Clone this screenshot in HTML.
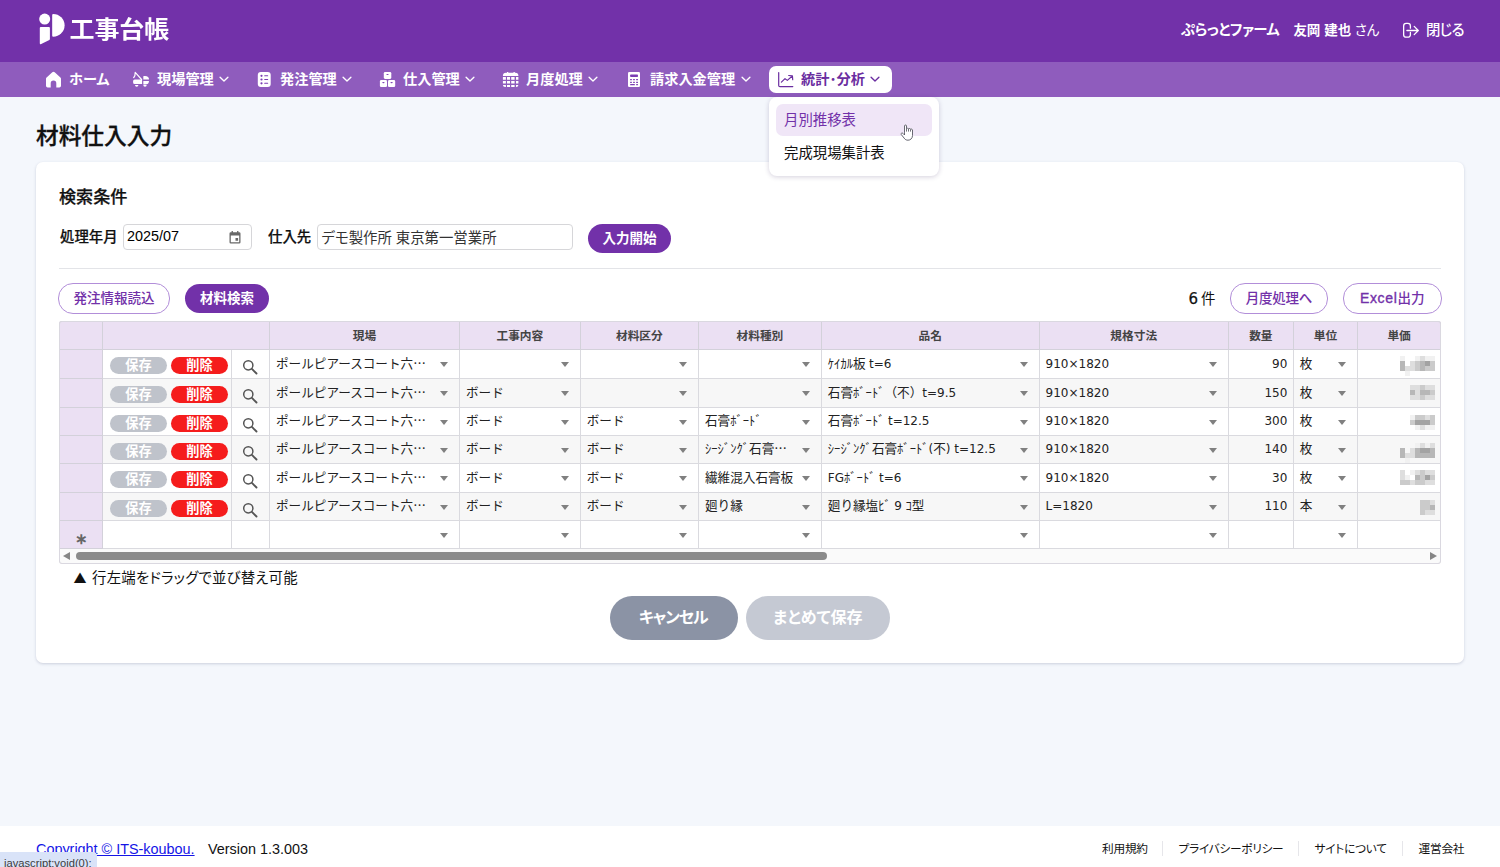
<!DOCTYPE html>
<html lang="ja">
<head>
<meta charset="utf-8">
<title>工事台帳 - 材料仕入入力</title>
<style>
*{box-sizing:border-box;margin:0;padding:0}
html,body{width:1500px;height:867px;overflow:hidden}
body{font-feature-settings:"palt";position:relative;background:#f4f7fc;color:#111;font-family:"Liberation Sans","Noto Sans CJK JP",sans-serif;font-size:14.4px;line-height:1}
a{color:inherit;text-decoration:none}
svg{display:block}

/* ===== top header ===== */
.top{position:absolute;left:0;top:0;width:1500px;height:62px;background:#7231a9;color:#fff}
.logo{position:absolute;left:39px;top:13px;width:26px;height:32px}
.brand{position:absolute;left:69.500px;top:15px;font-size:25px;font-weight:700;line-height:28px;letter-spacing:-.1px;white-space:nowrap;transform:scaleY(.94);transform-origin:50% 100%}
.user{position:absolute;left:1181px;top:21px;font-size:14.4px;line-height:18px;white-space:nowrap;font-weight:500}
.user b{font-weight:700;margin-left:10px;font-size:13.500px}.user .co{letter-spacing:-.4px;font-weight:700}.user .san{margin-left:-.5px;font-weight:400;font-size:13.500px}
.close{letter-spacing:-.6px;position:absolute;left:1402px;top:21px;font-size:14.4px;line-height:18px;white-space:nowrap;display:flex;align-items:center;font-weight:500}
.close svg{margin-right:6px}

/* ===== nav ===== */
.menu{position:absolute;left:0;top:62px;width:1500px;height:34.5px;background:#8f5cbd;color:#fff;font-weight:700;font-size:14.200px}
.mi{position:absolute;top:4px;height:27px;display:flex;align-items:center;white-space:nowrap;line-height:27px}
.mi .ic{width:17px;height:17px;margin-right:7px;flex:none}
.mi .cv{width:10px;height:6.400px;margin-left:5.500px;flex:none}
.mi.on{background:#fff;color:#6a2da0;border-radius:7px;padding:0 11.600px 0 9px}
.mi.on .ic{margin-right:6px}

/* dropdown */
.dd{z-index:5;position:absolute;left:769px;top:97px;width:170px;height:79px;background:#fff;border-radius:8px;box-shadow:0 1px 5px rgba(40,20,80,.2);font-size:14.4px;font-weight:400}
.dd a{position:absolute;left:7px;width:156px;height:32px;line-height:32px;padding-left:8px;border-radius:7px;color:#111}
.dd a.hv{background:#f0e6f7;color:#7231a9}
.cursor{z-index:6;position:absolute;left:900px;top:124px;width:14px;height:17px;filter:drop-shadow(0 0 .5px #fff)}

/* ===== main ===== */
h1{position:absolute;left:36px;top:121.500px;font-size:22.700px;line-height:28px;font-weight:500;-webkit-text-stroke:.3px #111;white-space:nowrap;color:#111}
.card{position:absolute;left:36px;top:162px;width:1428px;height:501px;background:#fff;border-radius:7px;box-shadow:0 1px 3px rgba(60,70,110,.22)}
h2{position:absolute;left:23px;top:24.500px;font-size:17.100px;line-height:22px;font-weight:500;-webkit-text-stroke:.25px #111;white-space:nowrap}
.lbl{position:absolute;font-weight:500;-webkit-text-stroke:.2px #111;font-size:14.4px;line-height:18px;white-space:nowrap}
.inp{position:absolute;height:26px;border:1px solid #d6d6d9;border-radius:4px;background:#fff;font-size:14.4px;line-height:24px;padding-left:3px;white-space:nowrap;color:#000}
.btn{position:absolute;height:29px;border-radius:15px;font-size:13.5px;font-weight:700;line-height:29px;text-align:center;white-space:nowrap}
.btn.fill{background:#7231a9;color:#fff}
.btn.line{border:1px solid #b28ed9;color:#7231a9;background:#fff;line-height:29.500px;font-weight:500}
.hr{position:absolute;left:23px;top:106px;width:1382px;height:1px;background:#e3e4e8}
.cnt{position:absolute;left:1152.500px;top:126.500px;font-size:14.400px;line-height:20px;white-space:nowrap}
.n6{font-family:"DejaVu Sans","Liberation Sans",sans-serif;font-size:15px;margin-right:3px;-webkit-text-stroke:.25px #111}

/* ===== grid ===== */
.grid{position:absolute;left:23px;top:159px;width:1382px;height:243px;border-radius:3px;overflow:hidden;background:#fff;font-size:12.600px;font-feature-settings:normal;box-shadow:inset 0 0 0 1px #dcdbe1}
.grid::after{content:"";position:absolute;left:0;top:0;right:0;bottom:0;border:1px solid #dad8e0;border-radius:3px;pointer-events:none}
.row{position:absolute;left:0;width:1410px}
.c{position:absolute;top:0;height:100%;border-right:1px solid #dadadf;border-bottom:1px solid #dadadf;padding-left:6px;white-space:nowrap;overflow:hidden;color:#222;background:#fff}
.row.h .c{background:#ebe0f3;font-weight:700;font-size:11.700px;text-align:center;padding:0;color:#444;border-color:#d3d1da;border-top:1px solid #d8d7de;line-height:27px}
.row.alt .c{background:#f7f7f7}
.row .c.rh{background:#ebe0f3;border-color:#d3d1da;border-left:1px solid #d8d7de}
.c.gb{letter-spacing:0}
.el{font-family:"Noto Sans CJK JP",sans-serif;line-height:0}
.c.num{text-align:right;padding:0 5.500px 0 0}
.c i.ar{position:absolute;right:11px;top:11.500px;width:0;height:0;border-left:4.600px solid transparent;border-right:4.600px solid transparent;border-top:5.600px solid #808080}
.lat{font-family:"DejaVu Sans","Liberation Sans",sans-serif;font-size:12px}
.pill{position:absolute;top:7px;height:17px;width:57px;border-radius:9px;color:#fff;font-weight:700;font-size:13.200px;line-height:17px;text-align:center}
.pill.sv{left:6.600px;background:#bfc3cb}
.pill.dl{left:67.600px;background:#f51c1c}
.mag{position:absolute;left:10px;top:9px;width:16px;height:16px}
.ast{position:absolute;left:15px;top:8px;font-size:15px;line-height:20px;color:#666;font-weight:700}
.mos{position:absolute;filter:blur(.4px)}
.sb{position:absolute;left:1px;top:228px;width:1380px;height:14px;background:#fafafa}
.sb .th{position:absolute;left:16px;top:3px;width:751px;height:8px;border-radius:4px;background:#8b8b8b}
.sb .l{position:absolute;left:3px;top:3px;width:0;height:0;border-top:4.700px solid transparent;border-bottom:4.700px solid transparent;border-right:7.500px solid #858585}
.sb .r{position:absolute;right:3.500px;top:3px;width:0;height:0;border-top:4.700px solid transparent;border-bottom:4.700px solid transparent;border-left:7.500px solid #868686}
.dt{position:relative;top:-1px}
.calic{position:absolute;right:10px;top:6px;width:12px;height:13px}
.inp.sup{font-size:14.400px;color:#333;line-height:26px;padding-left:4px}
.ex{letter-spacing:.7px;font-size:14px;-webkit-text-stroke:.35px #7231a9}

.note{position:absolute;left:37.500px;top:405.500px;font-size:14.400px;line-height:20px;white-space:nowrap;letter-spacing:.22px}
.note .tri{font-family:"Noto Sans CJK JP",sans-serif;letter-spacing:0;margin-right:1.300px;font-size:13px}
.big{position:absolute;top:434px;height:44px;border-radius:22px;color:#fff;font-size:16px;font-weight:700;line-height:44px;text-align:center;white-space:nowrap}

/* ===== footer ===== */
.foot{position:absolute;left:0;top:826px;width:1500px;height:41px;background:#fff;font-size:14.400px}
.foot .cp{position:absolute;left:36px;top:13.500px;line-height:18px;color:#1414e6;text-decoration:underline;white-space:nowrap}
.foot .ver{position:absolute;left:208px;top:13.500px;line-height:18px;white-space:nowrap;color:#111}
.foot .lk{position:absolute;top:14px;line-height:18px;font-size:11.700px;white-space:nowrap;color:#111;letter-spacing:-.25px}
.foot .sp{position:absolute;top:15px;width:1px;height:15px;background:#e6e6ea}
.status{position:absolute;left:0;top:851.500px;height:16px;width:97px;background:#d9e3f8;border-top-right-radius:4px;font-size:11.200px;line-height:14px;padding:4px 0 0 4px;color:#3c3c3c;white-space:nowrap;overflow:hidden;font-feature-settings:normal}
</style>
</head>
<body>

<header class="top">
  <svg class="logo" viewBox="0 0 26 32" fill="#fff"><circle cx="5.700" cy="6.100" r="5.500"/><path d="M1.800 13.900h8.100a1 1 0 0 1 1 1V26a1 1 0 0 1-.55.900L2.200 31.100a1 1 0 0 1-1.400-.9V14.900a1 1 0 0 1 1-1z"/><path d="M13.200 1.900a1 1 0 0 1 1-1 11.400 11.400 0 0 1 0 22.800 1 1 0 0 1-1-1z"/></svg>
  <div class="brand">工事台帳</div>
  <div class="user"><span class="co">ぷらっとファーム</span> <b>友岡 建也</b> <span class="san">さん</span></div>
  <a class="close"><svg width="18" height="18" viewBox="0 0 18 18" fill="none" stroke="#fff" stroke-width="1.300" stroke-linecap="round" stroke-linejoin="round"><path d="M8.400 7.200V4.950a2.500 2.500 0 0 0-2.500-2.500H4.150a2.500 2.500 0 0 0-2.500 2.500V13.650a2.500 2.500 0 0 0 2.500 2.500H5.900a2.500 2.500 0 0 0 2.500-2.500V11.400"/><path d="M4.900 9.500H16.200M12.200 5.400 16.300 9.500 12.200 13.600"/></svg>閉じる</a>
</header>

<nav class="menu">
  <a class="mi" style="left:45px"><svg class="ic" viewBox="0 0 17 17" fill="#fff"><path d="M7.300 1.300a1.800 1.800 0 0 1 2.400 0l5.700 5.100a1.800 1.800 0 0 1 .6 1.340V14.800a1.700 1.700 0 0 1-1.700 1.700H11.300V12.400a2.800 2.800 0 0 0-5.600 0v4.100H2.700A1.700 1.700 0 0 1 1 14.800V7.740a1.800 1.800 0 0 1 .6-1.340z"/></svg>ホーム</a>
  <a class="mi" style="left:133px"><svg class="ic" viewBox="0 0 17 17" fill="#fff"><path d="M1.700 8.500H9.100V13H1.700A1.600 1.600 0 0 1 .1 11.400V10.100A1.600 1.600 0 0 1 1.700 8.500z"/><path d="M.7 6.600 1.900 4.600 2.200 1.300 8.600 8.500" fill="none" stroke="#fff" stroke-width="1.150" stroke-linejoin="round" stroke-linecap="round"/><path d="M10.300 8.500V5.500a.5.500 0 0 1 .5-.5h1.200a4 3.500 0 0 1 4 3.500z"/><path d="M10.300 10H16a4 3.500 0 0 1-4 3.500h-1.700z"/><path d="M2 14.100h3.400a1.700 1.700 0 0 1-3.400 0zM10.300 14.100h3.400a1.700 1.700 0 0 1-3.400 0z"/></svg>現場管理<svg class="cv" viewBox="0 0 11 7" fill="none" stroke="currentColor" stroke-width="1.500" stroke-linecap="round" stroke-linejoin="round"><path d="M1.200 1.300 5.500 5.500 9.800 1.300"/></svg></a>
  <a class="mi" style="left:256px"><svg class="ic" viewBox="0 0 17 17"><rect x="1.800" y=".9" width="12.900" height="15.100" rx="3" fill="#fff"/><g fill="#7a3db3"><circle cx="5.500" cy="4.800" r="1.100"/><circle cx="5.500" cy="8.500" r="1.100"/><circle cx="5.500" cy="12.300" r="1.100"/><rect x="8.200" y="4.250" width="4" height="1.100" rx=".5"/><rect x="8.200" y="7.950" width="4" height="1.100" rx=".5"/><rect x="8.200" y="11.750" width="4" height="1.100" rx=".5"/></g></svg>発注管理<svg class="cv" viewBox="0 0 11 7" fill="none" stroke="currentColor" stroke-width="1.500" stroke-linecap="round" stroke-linejoin="round"><path d="M1.200 1.300 5.500 5.500 9.800 1.300"/></svg></a>
  <a class="mi" style="left:379px"><svg class="ic" viewBox="0 0 17 17"><g fill="#fff"><rect x="4.800" y="1" width="7.500" height="6.900" rx="1.300"/><rect x=".9" y="9.100" width="7.100" height="6.900" rx="1.300"/><rect x="9" y="9.100" width="7.200" height="6.900" rx="1.300"/></g><g fill="#7a3db3"><ellipse cx="8.500" cy="3.500" rx="1.200" ry=".55"/><ellipse cx="4.400" cy="11.600" rx="1.200" ry=".55"/><ellipse cx="12.600" cy="11.600" rx="1.200" ry=".55"/></g></svg>仕入管理<svg class="cv" viewBox="0 0 11 7" fill="none" stroke="currentColor" stroke-width="1.500" stroke-linecap="round" stroke-linejoin="round"><path d="M1.200 1.300 5.500 5.500 9.800 1.300"/></svg></a>
  <a class="mi" style="left:502px"><svg class="ic" viewBox="0 0 17 17" fill="#fff"><path d="M.9 5V4.800a3 3 0 0 1 3-3H5V.9h1.300v.9h5.200V.9h1.300v.9h.6a3 3 0 0 1 3 3V5z"/><path d="M.9 6.100h3v2.600h-3zm4.100 0h3v2.600H5zm4.200 0h3.400v2.600H9.200zm4.800 0h2.400v2.600H14zM.9 10h3v2.600h-3zm4.100 0h3v2.600H5zm4.200 0h3.400v2.600H9.200zm4.800 0h2.400v2.600H14zM.9 14h3v2H3.100A2.200 2.200 0 0 1 .9 14zm4.100 0h3v2H5zm4.200 0h3.400v2H9.200zm4.800 0h2.400a2.200 2.200 0 0 1-2.200 2H14z"/></svg>月度処理<svg class="cv" viewBox="0 0 11 7" fill="none" stroke="currentColor" stroke-width="1.500" stroke-linecap="round" stroke-linejoin="round"><path d="M1.200 1.300 5.500 5.500 9.800 1.300"/></svg></a>
  <a class="mi" style="left:626px"><svg class="ic" viewBox="0 0 17 17"><rect x="2" y="1" width="12" height="15" rx="1.200" fill="#fff"/><g fill="#7a3db3"><rect x="4.100" y="3.400" width="7.900" height="2.600" rx=".8"/><rect x="4.100" y="8.100" width="1.800" height="1.100" rx=".3"/><rect x="7.100" y="8.100" width="1.800" height="1.100" rx=".3"/><rect x="10.100" y="8.100" width="1.900" height="1.100" rx=".3"/><rect x="4.100" y="10.800" width="1.800" height="1.100" rx=".3"/><rect x="7.100" y="10.800" width="1.800" height="1.100" rx=".3"/><rect x="10.100" y="10.800" width="1.900" height="1.100" rx=".3"/><rect x="4.100" y="13.100" width="4.800" height="1.200" rx=".4"/><rect x="10.100" y="13.100" width="1.900" height="1.200" rx=".4"/></g></svg>請求入金管理<svg class="cv" viewBox="0 0 11 7" fill="none" stroke="currentColor" stroke-width="1.500" stroke-linecap="round" stroke-linejoin="round"><path d="M1.200 1.300 5.500 5.500 9.800 1.300"/></svg></a>
  <a class="mi on" style="left:769px"><svg class="ic" viewBox="0 0 17 17" fill="none" stroke="currentColor" stroke-width="1.200" stroke-linecap="round" stroke-linejoin="round"><path d="M.7 1.600V14.400a1.200 1.200 0 0 0 1.200 1.200H14.800"/><path d="M3.400 11.200 7 7.600 9.300 9.400 14.300 5M10.700 4.500 14.400 4.900 14.700 8.700"/></svg>統計･分析<svg class="cv" viewBox="0 0 11 7" fill="none" stroke="currentColor" stroke-width="1.500" stroke-linecap="round" stroke-linejoin="round"><path d="M1.200 1.300 5.500 5.500 9.800 1.300"/></svg></a>
</nav>

<div class="dd">
  <a class="hv" style="top:7px">月別推移表</a>
  <a style="top:40px">完成現場集計表</a>
</div>
<svg class="cursor" viewBox="0 0 14 17"><path d="M4.500 8.800V2a1 1 0 0 1 2 0V4.600c.3-.5 1.700-.5 2 .1.400-.4 1.700-.3 2 .4.500-.3 1.800-.1 2 .9V11.500c0 2.800-2 4.700-4.500 4.700-1.800 0-2.900-.7-3.800-2L1.300 10.600c-.4-.6-.2-1.200.3-1.500.5-.2 1-.1 1.400.3L4.500 11z" fill="#fff" stroke="#4d4d58" stroke-width=".85" stroke-linejoin="round"/><path d="M6.500 4.600V7.600M8.500 4.900V7.600M10.500 5.300V7.600" stroke="#4d4d58" stroke-width=".8" fill="none"/></svg>


<h1>材料仕入入力</h1>

<section class="card">
  <h2>検索条件</h2>
  <span class="lbl" style="left:24px;top:66px">処理年月</span>
  <div class="inp" style="left:87px;top:62px;width:128.500px"><span class="dt">2025/07</span><svg class="calic" viewBox="0 0 12 13"><path d="M2.600 0h1.300v1.300h4.200V0h1.300v1.300h.8A1.300 1.300 0 0 1 11.500 2.600v8.600a1.300 1.300 0 0 1-1.300 1.300H1.800A1.300 1.300 0 0 1 .5 11.200V2.600A1.300 1.300 0 0 1 1.800 1.300h.8zM1.800 4.400v6.800h8.400V4.400zM6.500 7h2.600v2.700H6.500z" fill="#686868" fill-rule="evenodd"/></svg></div>
  <span class="lbl" style="left:232px;top:66px">仕入先</span>
  <div class="inp sup" style="left:280.500px;top:62px;width:256px">デモ製作所 東京第一営業所</div>
  <a class="btn fill" style="left:552px;top:62px;width:83px">入力開始</a>
  <div class="hr"></div>
  <a class="btn line" style="left:22px;top:121.200px;width:112px;height:30.500px">発注情報読込</a>
  <a class="btn fill" style="left:149px;top:122px;width:84px;height:29px">材料検索</a>
  <span class="cnt"><span class="n6">6</span>件</span>
  <a class="btn line" style="left:1194px;top:121.200px;width:98px;height:30.500px;letter-spacing:-.25px">月度処理へ</a>
  <a class="btn line" style="left:1307px;top:121.200px;width:98.500px;height:30.500px"><span class="ex">Excel</span>出力</a>

  <div class="grid">
    <div class="row h" style="top:0;height:29px"><div class="c rh" style="left:0px;width:44.4px;"></div><div class="c" style="left:44.4px;width:166.6px"></div><div class="c " style="left:211px;width:190px;">現場</div><div class="c " style="left:401px;width:120.7px;">工事内容</div><div class="c " style="left:521.7px;width:118.3px;">材料区分</div><div class="c " style="left:640px;width:122.8px;">材料種別</div><div class="c " style="left:762.8px;width:217.8px;">品名</div><div class="c " style="left:980.6px;width:189.3px;">規格寸法</div><div class="c " style="left:1169.9px;width:64.9px;">数量</div><div class="c " style="left:1234.8px;width:64.4px;">単位</div><div class="c " style="left:1299.2px;width:82.8px;">単価</div></div>
    <div class="row" style="top:29px;height:29px;line-height:28px"><div class="c rh" style="left:0px;width:44.4px;"></div><div class="c " style="left:44.4px;width:128.6px;"><span class="pill sv">保存</span><span class="pill dl">削除</span></div><div class="c " style="left:173px;width:38px;"><svg class="mag" viewBox="0 0 16 16" fill="none" stroke="#555" stroke-width="1.500" stroke-linecap="round"><circle cx="6.300" cy="6.300" r="4.600"/><path d="M9.900 9.900 14.500 14.500" stroke-width="1.900"/></svg></div><div class="c gb" style="left:211px;width:190px;">ポールピアースコート六<span class="el">…</span><i class="ar"></i></div><div class="c " style="left:401px;width:120.7px;"><i class="ar"></i></div><div class="c " style="left:521.7px;width:118.3px;"><i class="ar"></i></div><div class="c " style="left:640px;width:122.8px;"><i class="ar"></i></div><div class="c " style="left:762.8px;width:217.8px;">ｹｲｶﾙ板 <span class="lat">t=6</span><i class="ar"></i></div><div class="c " style="left:980.6px;width:189.3px;"><span class="lat">910×1820</span><i class="ar"></i></div><div class="c num" style="left:1169.9px;width:64.9px;"><span class="lat">90</span></div><div class="c " style="left:1234.8px;width:64.4px;">枚<i class="ar"></i></div><div class="c " style="left:1299.2px;width:82.8px;"><svg class="mos" style="left:41.8px;top:5.5px" width="35" height="20" viewBox="0 0 35 20"><rect x="0" y="0" width="5" height="5" fill="#f1f1f1"/><rect x="15" y="0" width="5" height="5" fill="#f1f1f1"/><rect x="20" y="0" width="5" height="5" fill="#dedede"/><rect x="25" y="0" width="5" height="5" fill="#f1f1f1"/><rect x="30" y="0" width="5" height="5" fill="#f1f1f1"/><rect x="0" y="5" width="5" height="5" fill="#b7b7b7"/><rect x="10" y="5" width="5" height="5" fill="#dedede"/><rect x="15" y="5" width="5" height="5" fill="#cbcbcb"/><rect x="20" y="5" width="5" height="5" fill="#b7b7b7"/><rect x="25" y="5" width="5" height="5" fill="#a3a3a3"/><rect x="30" y="5" width="5" height="5" fill="#cbcbcb"/><rect x="0" y="10" width="5" height="5" fill="#b7b7b7"/><rect x="5" y="10" width="5" height="5" fill="#dedede"/><rect x="10" y="10" width="5" height="5" fill="#dedede"/><rect x="15" y="10" width="5" height="5" fill="#cbcbcb"/><rect x="20" y="10" width="5" height="5" fill="#b7b7b7"/><rect x="25" y="10" width="5" height="5" fill="#cbcbcb"/><rect x="30" y="10" width="5" height="5" fill="#cbcbcb"/><rect x="5" y="15" width="5" height="5" fill="#f1f1f1"/></svg></div></div>
    <div class="row alt" style="top:58px;height:29px;line-height:28px"><div class="c rh" style="left:0px;width:44.4px;"></div><div class="c " style="left:44.4px;width:128.6px;"><span class="pill sv">保存</span><span class="pill dl">削除</span></div><div class="c " style="left:173px;width:38px;"><svg class="mag" viewBox="0 0 16 16" fill="none" stroke="#555" stroke-width="1.500" stroke-linecap="round"><circle cx="6.300" cy="6.300" r="4.600"/><path d="M9.900 9.900 14.500 14.500" stroke-width="1.900"/></svg></div><div class="c gb" style="left:211px;width:190px;">ポールピアースコート六<span class="el">…</span><i class="ar"></i></div><div class="c " style="left:401px;width:120.7px;">ボード<i class="ar"></i></div><div class="c " style="left:521.7px;width:118.3px;"><i class="ar"></i></div><div class="c " style="left:640px;width:122.8px;"><i class="ar"></i></div><div class="c " style="left:762.8px;width:217.8px;">石膏ﾎﾞｰﾄﾞ（不）<span class="lat">t=9.5</span><i class="ar"></i></div><div class="c " style="left:980.6px;width:189.3px;"><span class="lat">910×1820</span><i class="ar"></i></div><div class="c num" style="left:1169.9px;width:64.9px;"><span class="lat">150</span></div><div class="c " style="left:1234.8px;width:64.4px;">枚<i class="ar"></i></div><div class="c " style="left:1299.2px;width:82.8px;"><svg class="mos" style="left:51.8px;top:6px" width="25" height="15" viewBox="0 0 25 15"><rect x="0" y="0" width="5" height="5" fill="#dedede"/><rect x="5" y="0" width="5" height="5" fill="#dedede"/><rect x="10" y="0" width="5" height="5" fill="#cbcbcb"/><rect x="15" y="0" width="5" height="5" fill="#dedede"/><rect x="20" y="0" width="5" height="5" fill="#dedede"/><rect x="0" y="5" width="5" height="5" fill="#b7b7b7"/><rect x="5" y="5" width="5" height="5" fill="#dedede"/><rect x="10" y="5" width="5" height="5" fill="#b7b7b7"/><rect x="15" y="5" width="5" height="5" fill="#b7b7b7"/><rect x="20" y="5" width="5" height="5" fill="#cbcbcb"/><rect x="0" y="10" width="5" height="5" fill="#dedede"/><rect x="5" y="10" width="5" height="5" fill="#dedede"/><rect x="10" y="10" width="5" height="5" fill="#cbcbcb"/><rect x="15" y="10" width="5" height="5" fill="#dedede"/><rect x="20" y="10" width="5" height="5" fill="#dedede"/></svg></div></div>
    <div class="row" style="top:87px;height:28px;line-height:27px"><div class="c rh" style="left:0px;width:44.4px;"></div><div class="c " style="left:44.4px;width:128.6px;"><span class="pill sv">保存</span><span class="pill dl">削除</span></div><div class="c " style="left:173px;width:38px;"><svg class="mag" viewBox="0 0 16 16" fill="none" stroke="#555" stroke-width="1.500" stroke-linecap="round"><circle cx="6.300" cy="6.300" r="4.600"/><path d="M9.900 9.900 14.500 14.500" stroke-width="1.900"/></svg></div><div class="c gb" style="left:211px;width:190px;">ポールピアースコート六<span class="el">…</span><i class="ar"></i></div><div class="c " style="left:401px;width:120.7px;">ボード<i class="ar"></i></div><div class="c " style="left:521.7px;width:118.3px;">ボード<i class="ar"></i></div><div class="c " style="left:640px;width:122.8px;">石膏ﾎﾞｰﾄﾞ<i class="ar"></i></div><div class="c " style="left:762.8px;width:217.8px;">石膏ﾎﾞｰﾄﾞ <span class="lat">t=12.5</span><i class="ar"></i></div><div class="c " style="left:980.6px;width:189.3px;"><span class="lat">910×1820</span><i class="ar"></i></div><div class="c num" style="left:1169.9px;width:64.9px;"><span class="lat">300</span></div><div class="c " style="left:1234.8px;width:64.4px;">枚<i class="ar"></i></div><div class="c " style="left:1299.2px;width:82.8px;"><svg class="mos" style="left:51.8px;top:7px" width="25" height="15" viewBox="0 0 25 15"><rect x="0" y="0" width="5" height="5" fill="#f1f1f1"/><rect x="5" y="0" width="5" height="5" fill="#cbcbcb"/><rect x="10" y="0" width="5" height="5" fill="#cbcbcb"/><rect x="15" y="0" width="5" height="5" fill="#dedede"/><rect x="20" y="0" width="5" height="5" fill="#cbcbcb"/><rect x="0" y="5" width="5" height="5" fill="#cbcbcb"/><rect x="5" y="5" width="5" height="5" fill="#a3a3a3"/><rect x="10" y="5" width="5" height="5" fill="#a3a3a3"/><rect x="15" y="5" width="5" height="5" fill="#a3a3a3"/><rect x="20" y="5" width="5" height="5" fill="#cbcbcb"/><rect x="5" y="10" width="5" height="5" fill="#f1f1f1"/><rect x="10" y="10" width="5" height="5" fill="#dedede"/><rect x="15" y="10" width="5" height="5" fill="#f1f1f1"/><rect x="20" y="10" width="5" height="5" fill="#f1f1f1"/></svg></div></div>
    <div class="row alt" style="top:115px;height:28px;line-height:27px"><div class="c rh" style="left:0px;width:44.4px;"></div><div class="c " style="left:44.4px;width:128.6px;"><span class="pill sv">保存</span><span class="pill dl">削除</span></div><div class="c " style="left:173px;width:38px;"><svg class="mag" viewBox="0 0 16 16" fill="none" stroke="#555" stroke-width="1.500" stroke-linecap="round"><circle cx="6.300" cy="6.300" r="4.600"/><path d="M9.900 9.900 14.500 14.500" stroke-width="1.900"/></svg></div><div class="c gb" style="left:211px;width:190px;">ポールピアースコート六<span class="el">…</span><i class="ar"></i></div><div class="c " style="left:401px;width:120.7px;">ボード<i class="ar"></i></div><div class="c " style="left:521.7px;width:118.3px;">ボード<i class="ar"></i></div><div class="c " style="left:640px;width:122.8px;">ｼｰｼﾞﾝｸﾞ石膏<span class="el">…</span><i class="ar"></i></div><div class="c " style="left:762.8px;width:217.8px;">ｼｰｼﾞﾝｸﾞ石膏ﾎﾞｰﾄﾞ<span class="lat">(</span>不<span class="lat">) t=12.5</span><i class="ar"></i></div><div class="c " style="left:980.6px;width:189.3px;"><span class="lat">910×1820</span><i class="ar"></i></div><div class="c num" style="left:1169.9px;width:64.9px;"><span class="lat">140</span></div><div class="c " style="left:1234.8px;width:64.4px;">枚<i class="ar"></i></div><div class="c " style="left:1299.2px;width:82.8px;"><svg class="mos" style="left:41.8px;top:7px" width="35" height="20" viewBox="0 0 35 20"><rect x="15" y="0" width="5" height="5" fill="#f1f1f1"/><rect x="20" y="0" width="5" height="5" fill="#dedede"/><rect x="25" y="0" width="5" height="5" fill="#f1f1f1"/><rect x="30" y="0" width="5" height="5" fill="#dedede"/><rect x="0" y="5" width="5" height="5" fill="#b7b7b7"/><rect x="10" y="5" width="5" height="5" fill="#dedede"/><rect x="15" y="5" width="5" height="5" fill="#b7b7b7"/><rect x="20" y="5" width="5" height="5" fill="#a3a3a3"/><rect x="25" y="5" width="5" height="5" fill="#a3a3a3"/><rect x="30" y="5" width="5" height="5" fill="#b7b7b7"/><rect x="0" y="10" width="5" height="5" fill="#b7b7b7"/><rect x="5" y="10" width="5" height="5" fill="#dedede"/><rect x="10" y="10" width="5" height="5" fill="#dedede"/><rect x="15" y="10" width="5" height="5" fill="#b7b7b7"/><rect x="20" y="10" width="5" height="5" fill="#b7b7b7"/><rect x="25" y="10" width="5" height="5" fill="#b7b7b7"/><rect x="30" y="10" width="5" height="5" fill="#b7b7b7"/><rect x="5" y="15" width="5" height="5" fill="#f1f1f1"/></svg></div></div>
    <div class="row" style="top:143px;height:29px;line-height:28px"><div class="c rh" style="left:0px;width:44.4px;"></div><div class="c " style="left:44.4px;width:128.6px;"><span class="pill sv">保存</span><span class="pill dl">削除</span></div><div class="c " style="left:173px;width:38px;"><svg class="mag" viewBox="0 0 16 16" fill="none" stroke="#555" stroke-width="1.500" stroke-linecap="round"><circle cx="6.300" cy="6.300" r="4.600"/><path d="M9.900 9.900 14.500 14.500" stroke-width="1.900"/></svg></div><div class="c gb" style="left:211px;width:190px;">ポールピアースコート六<span class="el">…</span><i class="ar"></i></div><div class="c " style="left:401px;width:120.7px;">ボード<i class="ar"></i></div><div class="c " style="left:521.7px;width:118.3px;">ボード<i class="ar"></i></div><div class="c " style="left:640px;width:122.8px;">繊維混入石膏板<i class="ar"></i></div><div class="c " style="left:762.8px;width:217.8px;"><span class="lat">FG</span>ﾎﾞｰﾄﾞ <span class="lat">t=6</span><i class="ar"></i></div><div class="c " style="left:980.6px;width:189.3px;"><span class="lat">910×1820</span><i class="ar"></i></div><div class="c num" style="left:1169.9px;width:64.9px;"><span class="lat">30</span></div><div class="c " style="left:1234.8px;width:64.4px;">枚<i class="ar"></i></div><div class="c " style="left:1299.2px;width:82.8px;"><svg class="mos" style="left:41.8px;top:6px" width="35" height="15" viewBox="0 0 35 15"><rect x="0" y="0" width="5" height="5" fill="#dedede"/><rect x="10" y="0" width="5" height="5" fill="#f1f1f1"/><rect x="15" y="0" width="5" height="5" fill="#dedede"/><rect x="20" y="0" width="5" height="5" fill="#cbcbcb"/><rect x="25" y="0" width="5" height="5" fill="#dedede"/><rect x="30" y="0" width="5" height="5" fill="#dedede"/><rect x="0" y="5" width="5" height="5" fill="#dedede"/><rect x="5" y="5" width="5" height="5" fill="#f1f1f1"/><rect x="15" y="5" width="5" height="5" fill="#b7b7b7"/><rect x="20" y="5" width="5" height="5" fill="#cbcbcb"/><rect x="25" y="5" width="5" height="5" fill="#a3a3a3"/><rect x="30" y="5" width="5" height="5" fill="#cbcbcb"/><rect x="0" y="10" width="5" height="5" fill="#cbcbcb"/><rect x="5" y="10" width="5" height="5" fill="#cbcbcb"/><rect x="10" y="10" width="5" height="5" fill="#dedede"/><rect x="15" y="10" width="5" height="5" fill="#cbcbcb"/><rect x="20" y="10" width="5" height="5" fill="#cbcbcb"/><rect x="25" y="10" width="5" height="5" fill="#dedede"/><rect x="30" y="10" width="5" height="5" fill="#dedede"/></svg></div></div>
    <div class="row alt" style="top:172px;height:28px;line-height:27px"><div class="c rh" style="left:0px;width:44.4px;"></div><div class="c " style="left:44.4px;width:128.6px;"><span class="pill sv">保存</span><span class="pill dl">削除</span></div><div class="c " style="left:173px;width:38px;"><svg class="mag" viewBox="0 0 16 16" fill="none" stroke="#555" stroke-width="1.500" stroke-linecap="round"><circle cx="6.300" cy="6.300" r="4.600"/><path d="M9.900 9.900 14.500 14.500" stroke-width="1.900"/></svg></div><div class="c gb" style="left:211px;width:190px;">ポールピアースコート六<span class="el">…</span><i class="ar"></i></div><div class="c " style="left:401px;width:120.7px;">ボード<i class="ar"></i></div><div class="c " style="left:521.7px;width:118.3px;">ボード<i class="ar"></i></div><div class="c " style="left:640px;width:122.8px;">廻り縁<i class="ar"></i></div><div class="c " style="left:762.8px;width:217.8px;">廻り縁塩ﾋﾞ <span class="lat">9</span> ｺ型<i class="ar"></i></div><div class="c " style="left:980.6px;width:189.3px;"><span class="lat">L=1820</span><i class="ar"></i></div><div class="c num" style="left:1169.9px;width:64.9px;"><span class="lat">110</span></div><div class="c " style="left:1234.8px;width:64.4px;">本<i class="ar"></i></div><div class="c " style="left:1299.2px;width:82.8px;"><svg class="mos" style="left:61.8px;top:7px" width="15" height="15" viewBox="0 0 15 15"><rect x="0" y="0" width="5" height="5" fill="#cbcbcb"/><rect x="5" y="0" width="5" height="5" fill="#cbcbcb"/><rect x="10" y="0" width="5" height="5" fill="#dedede"/><rect x="0" y="5" width="5" height="5" fill="#cbcbcb"/><rect x="5" y="5" width="5" height="5" fill="#cbcbcb"/><rect x="10" y="5" width="5" height="5" fill="#b7b7b7"/><rect x="0" y="10" width="5" height="5" fill="#cbcbcb"/><rect x="5" y="10" width="5" height="5" fill="#dedede"/><rect x="10" y="10" width="5" height="5" fill="#dedede"/></svg></div></div>
    <div class="row" style="top:200px;height:28px;line-height:27px"><div class="c rh" style="left:0px;width:44.4px;"><span class="ast">∗</span></div><div class="c " style="left:44.4px;width:128.6px;"></div><div class="c " style="left:173px;width:38px;"></div><div class="c " style="left:211px;width:190px;"><i class="ar"></i></div><div class="c " style="left:401px;width:120.7px;"><i class="ar"></i></div><div class="c " style="left:521.7px;width:118.3px;"><i class="ar"></i></div><div class="c " style="left:640px;width:122.8px;"><i class="ar"></i></div><div class="c " style="left:762.8px;width:217.8px;"><i class="ar"></i></div><div class="c " style="left:980.6px;width:189.3px;"><i class="ar"></i></div><div class="c " style="left:1169.9px;width:64.9px;"></div><div class="c " style="left:1234.8px;width:64.4px;"><i class="ar"></i></div><div class="c " style="left:1299.2px;width:82.8px;"></div></div>
    <div class="sb"><i class="l"></i><i class="th"></i><i class="r"></i></div>
  </div>

  <p class="note"><span class="tri">▲</span> 行左端をドラッグで並び替え可能</p>
  <a class="big" style="left:574px;width:127.500px;background:#8b93a5;letter-spacing:-1px;text-indent:-1px">キャンセル</a>
  <a class="big" style="left:709.500px;width:144.500px;background:#c5c9d3">まとめて保存</a>
</section>

<footer class="foot">
  <a class="cp">Copyright © ITS-koubou.</a>
  <span class="ver">Version 1.3.003</span>
  <a class="lk" style="left:1102px">利用規約</a><i class="sp" style="left:1162px"></i>
  <a class="lk" style="left:1178.500px">プライバシーポリシー</a><i class="sp" style="left:1298px"></i>
  <a class="lk" style="left:1314.500px">サイトについて</a><i class="sp" style="left:1402px"></i>
  <a class="lk" style="left:1418.500px">運営会社</a>
</footer>
<div class="status">javascript:void(0);</div>
</body>
</html>
